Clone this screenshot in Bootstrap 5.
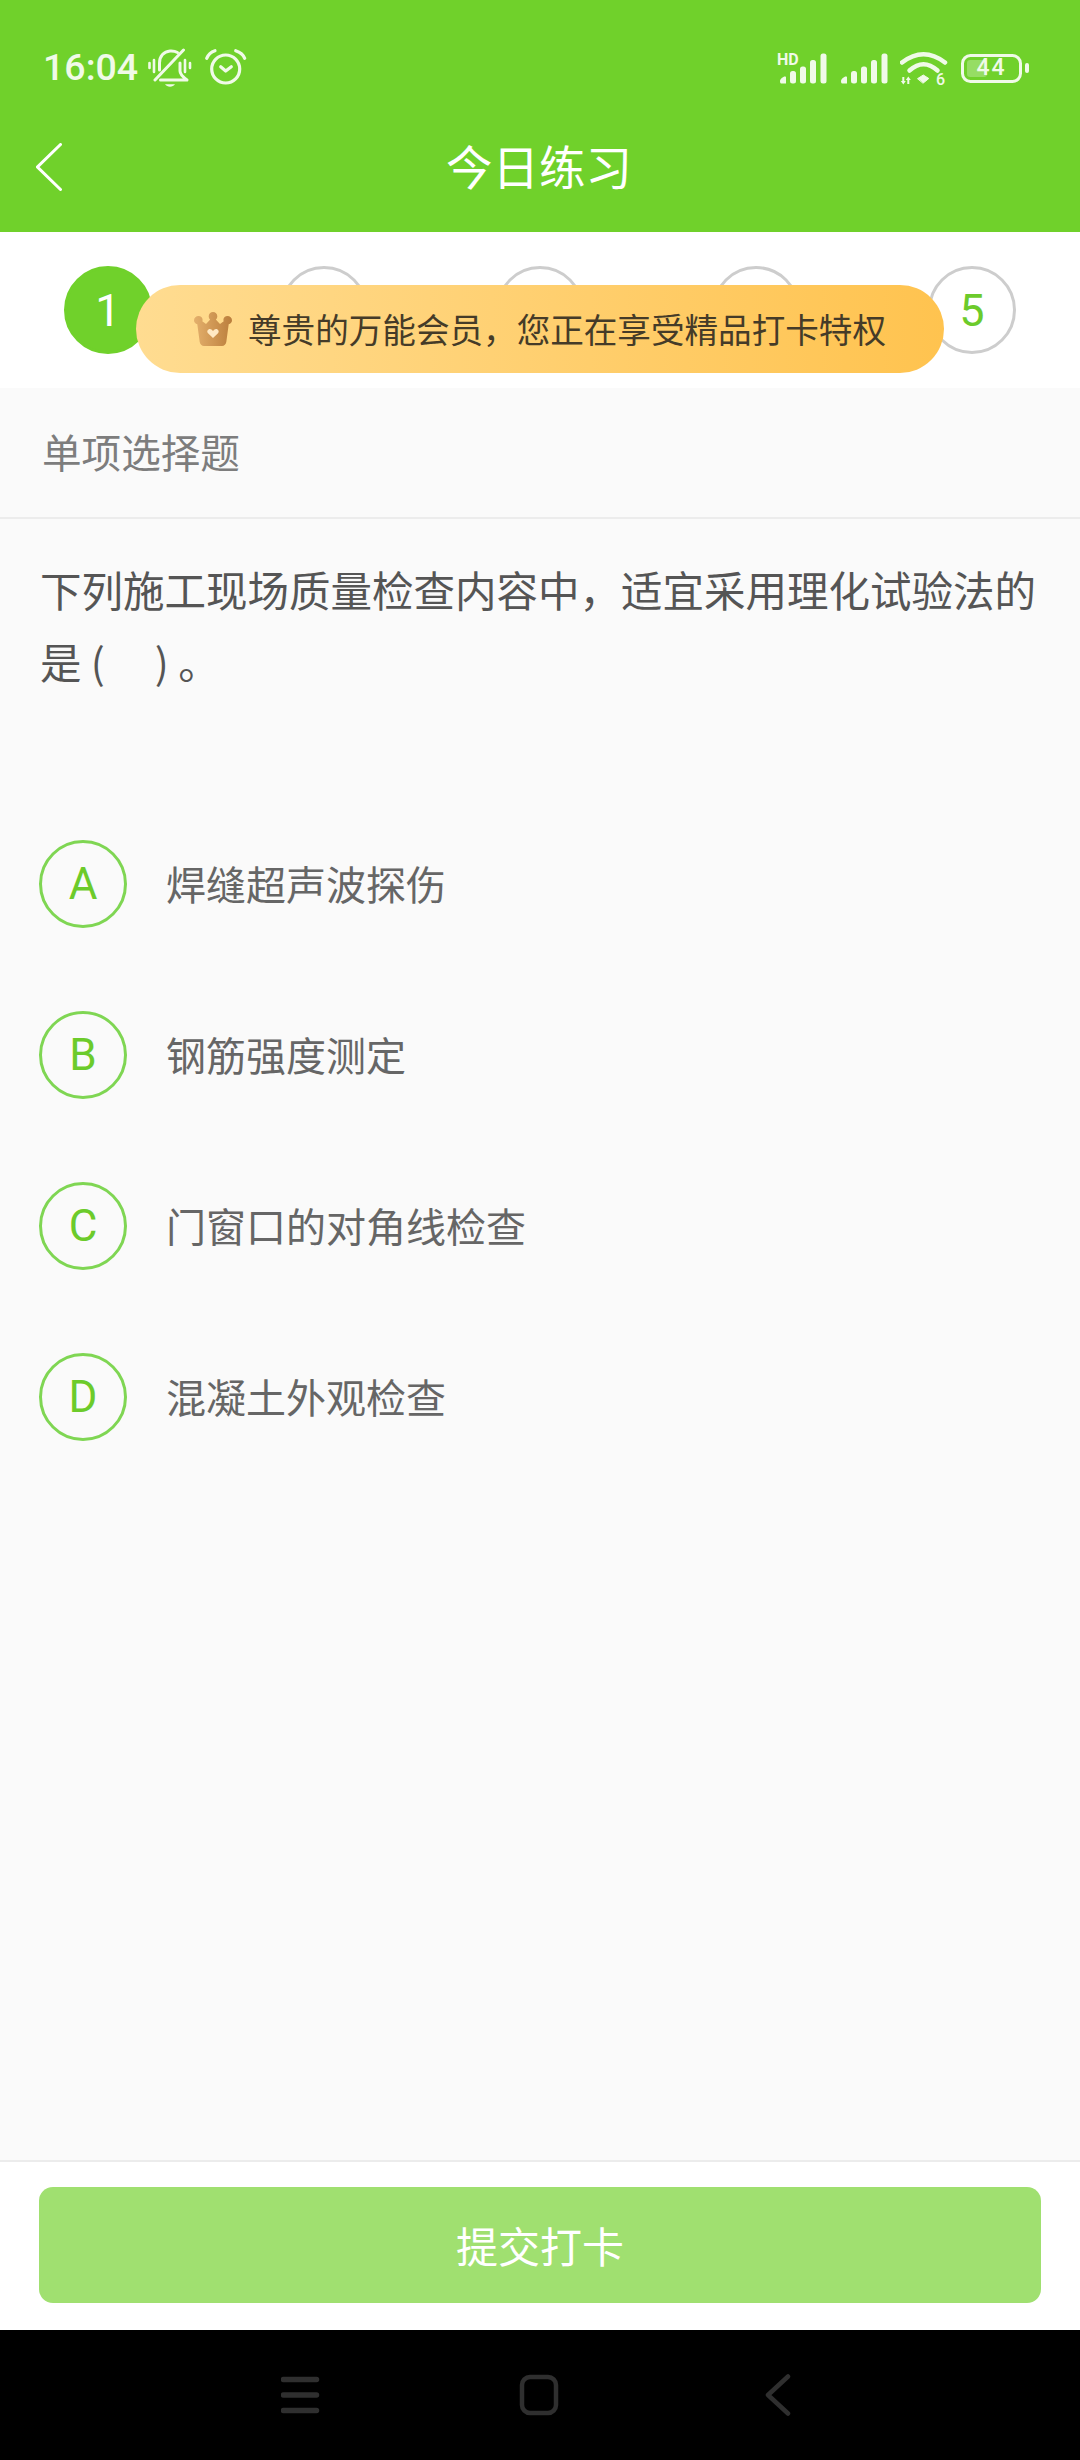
<!DOCTYPE html>
<html lang="zh-CN">
<head>
    <meta charset="UTF-8">
    <meta name="viewport" content="width=device-width, initial-scale=1.0">
    <title>今日练习</title>
    <link href="https://cdn.jsdelivr.net/npm/bootstrap@5.3.0/dist/css/bootstrap.min.css" rel="stylesheet">
    <style>
        body {
            font-family: "Noto Sans CJK SC", "Noto Sans", sans-serif;
            background-color: #fafafa;
        }
        .app-head { background-color: #70d12b; height: 232px; color: #fff; }
        .status-row { height: 104px; padding: 32px 50px 0 43px; color: #f0fae8; }
        .clock { font-family: "Roboto", sans-serif; font-size: 37.5px; font-weight: 500; line-height: 1; margin-right: 10px; }
        .bell-icon { margin-right: 12px; }
        .title-row { height: 128px; padding-bottom: 5px; }
        .back-icon { position: absolute; left: 36px; top: 39px; }
        .page-title { font-size: 46.5px; line-height: 1; margin-left: -2px; }
        .hd-mark { position: absolute; left: -2px; top: -1px; font: 700 16px/1 "Roboto", sans-serif; }
        .signal-gap { margin-left: 13px; }
        .wifi-gap { margin-left: 12px; }
        .batt-gap { margin-left: 12px; }
        .batt-num { position: absolute; left: 1px; top: 0; width: 61px; font: 500 23px/30px "Roboto", sans-serif; letter-spacing: 2px; text-align: center; }
        .step-strip { background-color: #fff; height: 156px; padding-top: 34px; }
        .step-cell { flex: 1 1 0; }
        .step-dot { width: 88px; height: 88px; border: 3px solid #cdcdcd; color: #6ccb2b; font: 400 45px/1 "Roboto", sans-serif; }
        .step-dot.is-on { background-color: #70d12b; border-color: #70d12b; color: #fff; }
        .vip-pill { position: absolute; left: 136px; top: 53px; width: 808px; height: 88px; background: linear-gradient(90deg, #ffdc91, #ffc34f); color: #453b28; font-size: 33.6px; line-height: 1; padding-left: 58px; }
        .vip-pill svg { margin-right: 16px; }
        .type-row { height: 131px; padding-left: 42px; padding-bottom: 3px; border-bottom: 2px solid #ececec; color: #7d7d7d; font-size: 39.6px; line-height: 1; }
        .question-text { padding: 34px 40px 0; color: #555; font-size: 41.5px; line-height: 72px; height: 321px; margin: 0; }
        .blank-gap { display: inline-block; width: 50px; }
        .answer-row { height: 171px; padding-left: 39px; }
        .answer-dot { width: 88px; height: 88px; border: 3px solid #7fd653; color: #6ccb2b; font: 400 44px/1 "Roboto", sans-serif; flex-shrink: 0; margin-right: 39px; }
        .answer-text { color: #666; font-size: 40px; line-height: 87px; }
        .foot-bar { background-color: #fff; height: 170px; border-top: 2px solid #ececec; padding: 25px 39px 0 39px; }
        .submit-btn { background-color: #a0e070; border: 0; border-radius: 14px; height: 116px; width: 1002px; color: #fff; font-size: 42px; line-height: 1; }
        .submit-btn:hover { background-color: #a0e070; color: #fff; }
        .sys-nav { background-color: #000; height: 130px; padding-left: 281px; }
    </style>
</head>
<body class="m-0">
    <div class="d-flex flex-column vh-100 overflow-hidden">
        <header class="app-head flex-shrink-0">
            <div class="status-row d-flex align-items-center">
                <div class="d-flex align-items-center flex-grow-1">
                    <span class="clock">16:04</span>
                    <svg class="bell-icon" width="44" height="40" viewBox="0 0 44 40" fill="none" stroke="#f0fae8" stroke-linecap="round" stroke-linejoin="round" stroke-width="3">
                        <path d="M1.500 15v5M6 12v12M37 12v12M42 15v5" stroke-width="2.600" />
                        <path d="M11.500 22v-7C11.500 8 16 3.500 22 3c3-.2 5.500.3 7.500 1.500" />
                        <path d="M32 15v8c0 3 3 6 7 9H12.500" />
                        <path d="M7 32 35.500 2" />
                        <path d="M17 36.300h10c-1 1.500-3 2.500-5 2.500s-4-1-5-2.500z" fill="#f0fae8" stroke="none" />
                    </svg>
                    <svg width="44" height="40" viewBox="0 0 44 40" fill="none" stroke="#f0fae8" stroke-linecap="round" stroke-linejoin="round" stroke-width="3.200">
                        <circle cx="21.700" cy="21" r="14" />
                        <path d="M16.700 18.700 21.700 23l5.600-4.300M2.700 10.300C4 7 7 4 11 2.700M31.700 2.700c4 1.300 7.700 4.300 9 7.600" />
                    </svg>
                </div>
                <div class="d-flex align-items-center">
                    <div class="position-relative">
                        <span class="hd-mark">HD</span>
                        <svg class="d-block" width="48" height="31" viewBox="0 0 48 31" fill="#f0fae8">
                            <path d="M1 28c0-2 3-4.500 5-4.500.6 0 1 .4 1 1v6H2.500c-.9 0-1.500-.6-1.500-2.500z" />
                            <rect x="11" y="18" width="6" height="12.500" rx="2.500" />
                            <rect x="21" y="13.500" width="6" height="17" rx="2.500" />
                            <rect x="31" y="7" width="6" height="23.500" rx="2.500" />
                            <rect x="41.500" y="0.500" width="6" height="30" rx="2.500" />
                        </svg>
                    </div>
                    <svg class="d-block signal-gap" width="48" height="31" viewBox="0 0 48 31" fill="#f0fae8">
                        <path d="M1 28c0-2 3-4.500 5-4.500.6 0 1 .4 1 1v6H2.500c-.9 0-1.500-.6-1.500-2.500z" />
                        <rect x="11" y="18" width="6" height="12.500" rx="2.500" />
                        <rect x="21" y="13.500" width="6" height="17" rx="2.500" />
                        <rect x="31" y="7" width="6" height="23.500" rx="2.500" />
                        <rect x="41.500" y="0.500" width="6" height="30" rx="2.500" />
                    </svg>
                    <svg class="wifi-gap" width="48" height="38" viewBox="0 0 48 38" fill="none" stroke="#f0fae8" stroke-width="4.500" stroke-linecap="round">
                        <path d="M2 13.500Q23.500-3 45 13.500" />
                        <path d="M9.500 21.500Q23.500 9 37.500 21.500" />
                        <path d="M17.800 29.500l5.500-3.500 5.500 3.500-5.500 4.500z" fill="#f0fae8" stroke-width="1" stroke-linejoin="round" />
                        <path d="M3.300 28v5M8.300 30v5" stroke-width="2" stroke-linecap="butt" />
                        <path d="M.8 32h5l-2.500 3.500zM5.800 31h5L8.300 27.500z" fill="#f0fae8" stroke="none" />
                        <text x="36" y="36" fill="#f0fae8" stroke="none" font-family="Roboto" font-weight="500" font-size="16">6</text>
                    </svg>
                    <div class="position-relative batt-gap">
                        <svg class="d-block" width="70" height="31" viewBox="0 0 70 31" fill="none">
                            <rect x="2.500" y="2.500" width="58" height="26" rx="8" stroke="#f0fae8" stroke-width="3" />
                            <rect x="7" y="7" width="20" height="17" rx="3" fill="#f0fae8" fill-opacity=".3" />
                            <rect x="65" y="10" width="4" height="10" rx="2" fill="#f0fae8" />
                        </svg>
                        <span class="batt-num">44</span>
                    </div>
                </div>
            </div>
            <div class="title-row position-relative d-flex align-items-center justify-content-center">
                <svg class="back-icon" width="26" height="48" viewBox="0 0 26 48" fill="none" stroke="#fff" stroke-width="3" stroke-linecap="round">
                    <path d="M24.500 1.500 1.500 24l23 22.500" />
                </svg>
                <span class="page-title">今日练习</span>
            </div>
        </header>

        <section class="step-strip position-relative d-flex flex-shrink-0">
            <div class="step-cell d-flex justify-content-center">
                <div class="step-dot is-on rounded-circle d-flex align-items-center justify-content-center">1</div>
            </div>
            <div class="step-cell d-flex justify-content-center">
                <div class="step-dot rounded-circle d-flex align-items-center justify-content-center"></div>
            </div>
            <div class="step-cell d-flex justify-content-center">
                <div class="step-dot rounded-circle d-flex align-items-center justify-content-center"></div>
            </div>
            <div class="step-cell d-flex justify-content-center">
                <div class="step-dot rounded-circle d-flex align-items-center justify-content-center"></div>
            </div>
            <div class="step-cell d-flex justify-content-center">
                <div class="step-dot rounded-circle d-flex align-items-center justify-content-center">5</div>
            </div>
            <div class="vip-pill rounded-pill d-flex align-items-center">
                <svg width="38" height="34" viewBox="0 0 38 34">
                    <defs>
                        <linearGradient id="crownFill" x1="0" x2="1" y1="0" y2="0">
                            <stop offset="0" stop-color="#e4b06c" />
                            <stop offset="1" stop-color="#bb7e3c" />
                        </linearGradient>
                    </defs>
                    <path fill="url(#crownFill)" d="M19 0c2.400 0 4.300 1.900 4.300 4.300 0 1.400-.6 2.500-1.500 3.300l4.200 4.400 3.700-2.800c-.2-.5-.3-1-.3-1.500C29.400 5.400 31.300 4 33.500 4 35.900 4 38 5.800 38 8.200c0 2-1.400 3.600-3.300 4L32.300 30c-.3 2.300-2 4-4.300 4H10c-2.300 0-4-1.700-4.300-4L3.300 12.200C1.400 11.800 0 10.200 0 8.200 0 5.800 2.100 4 4.500 4c2.200 0 4.100 1.400 4.100 3.700 0 .5-.1 1-.3 1.500l3.700 2.800 4.200-4.400c-.9-.8-1.500-1.900-1.500-3.300C14.700 1.900 16.600 0 19 0z" />
                    <path fill="#ffe9c4" d="M19 26l-5-4.700c-2.200-2.400 1.200-5.600 3.500-3.700L19 19l1.500-1.400c2.300-1.900 5.700 1.300 3.500 3.700z" />
                </svg>
                <span>尊贵的万能会员，您正在享受精品打卡特权</span>
            </div>
        </section>

        <main class="flex-grow-1">
            <div class="type-row d-flex align-items-center">单项选择题</div>
            <p class="question-text">下列施工现场质量检查内容中，适宜采用理化试验法的是 (<span class="blank-gap"></span>) 。</p>
            <div class="answer-row d-flex align-items-start">
                <div class="answer-dot rounded-circle d-flex align-items-center justify-content-center">A</div>
                <div class="answer-text">焊缝超声波探伤</div>
            </div>
            <div class="answer-row d-flex align-items-start">
                <div class="answer-dot rounded-circle d-flex align-items-center justify-content-center">B</div>
                <div class="answer-text">钢筋强度测定</div>
            </div>
            <div class="answer-row d-flex align-items-start">
                <div class="answer-dot rounded-circle d-flex align-items-center justify-content-center">C</div>
                <div class="answer-text">门窗口的对角线检查</div>
            </div>
            <div class="answer-row d-flex align-items-start">
                <div class="answer-dot rounded-circle d-flex align-items-center justify-content-center">D</div>
                <div class="answer-text">混凝土外观检查</div>
            </div>
        </main>

        <footer class="foot-bar flex-shrink-0">
            <button type="button" class="btn submit-btn d-flex align-items-center justify-content-center">提交打卡</button>
        </footer>

        <nav class="sys-nav flex-shrink-0 d-flex align-items-center">
            <svg width="510" height="42" viewBox="0 0 510 42" fill="none" stroke="#2f2f2f" stroke-linecap="round" stroke-linejoin="round">
                <path d="M2.500 5.500h33M2.500 21h33M2.500 36.500h33" stroke-width="5.500" />
                <rect x="241" y="3" width="34" height="36" rx="8" stroke-width="4.500" />
                <path d="M507 2.500 487 21l20 18.500" stroke-width="4.500" />
            </svg>
        </nav>
    </div>
</body>
</html>
